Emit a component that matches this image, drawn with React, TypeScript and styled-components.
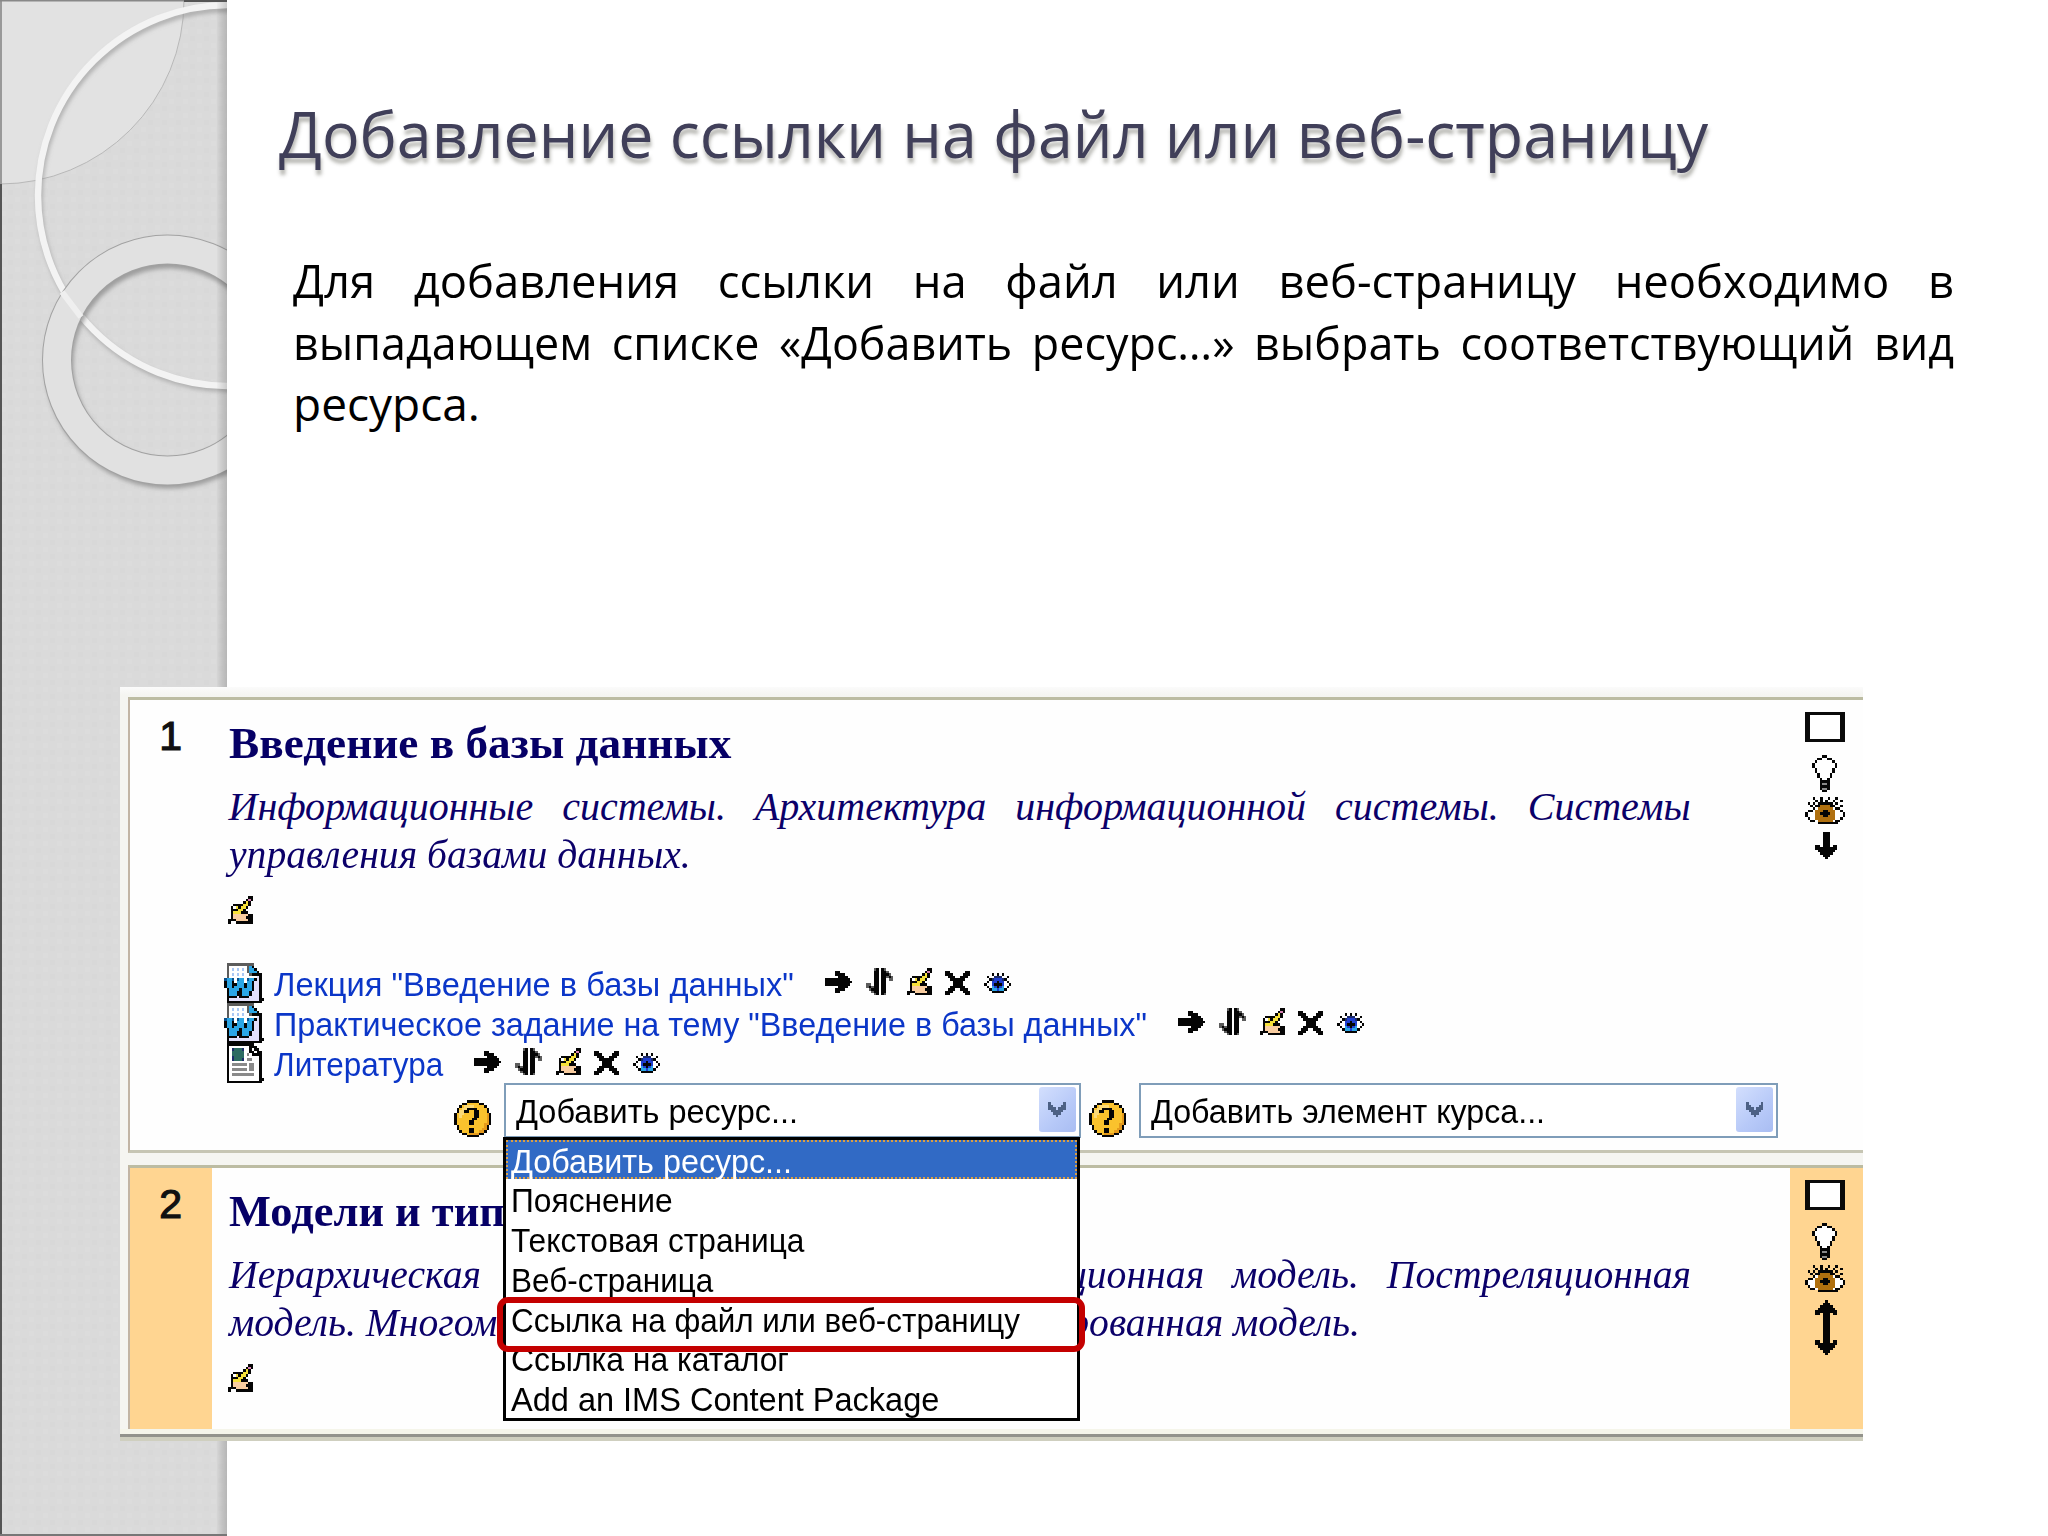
import React, { useLayoutEffect, useRef, useState } from "react";
import styled, { createGlobalStyle } from "styled-components";

const GlobalStyle = createGlobalStyle`
  html, body { margin: 0; padding: 0; background: #fff; }
  *, *::before, *::after { box-sizing: border-box; }
`;

/* ---------- pixel icons ---------- */

const CELL = 2.5;

const palette: Record<string, string> = {
  k: "#050505",
  g: "#5c5c5c",
  G: "#8a8a8a",
  w: "#ffffff",
  y: "#f6e03a",
  Y: "#fac22d",
  L: "#fbd977",
  O: "#e59a1c",
  p: "#d77fb4",
  s: "#f9cda0",
  b: "#1f3fd0",
  c: "#2ba6e6",
  d: "#0a4f8c",
  l: "#a9c8f5",
  v: "#e3e0fb",
  n: "#b0700f",
  t: "#2c6b62",
  N: "#1c2b6b",
};

const art = {
  arrow: [
    "...........",
    "....kk.....",
    "....kkkk...",
    ".....kkkk..",
    "kkkkkkkkkk.",
    "kkkkkkkkkkk",
    "kkkkkkkkkk.",
    ".....kkkk..",
    "....kkkk...",
    "....kk.....",
    "...........",
  ],
  move: [
    "...gk.kg...",
    "...kk.kkg..",
    "...kk.kkkg.",
    "...kk.kkgkg",
    "...kk.kk.gg",
    "...kk.kk...",
    "gg.kk.kk...",
    "gkgkk.kk...",
    ".gkkk.kk...",
    "..gkk.kk...",
    "...gk.kg...",
  ],
  edit: [
    "........kk",
    ".......kpk",
    "......kyk.",
    "..kkkkyyk.",
    ".kwykyyk..",
    ".kkkyyk...",
    ".kyyykkk..",
    ".ksssssskk",
    ".kssssskkk",
    "kkkssssskk",
    "k..kkkkkkk",
  ],
  remove: [
    "..........",
    "kk......kk",
    "kkk....kkk",
    ".kkk..kkk.",
    "..kkkkkk..",
    "...kkkk...",
    "...kkkk...",
    "..kkkkkk..",
    ".kkk..kkk.",
    "kkk....kkk",
    "kk......kk",
  ],
  eye: [
    "...........",
    "...........",
    "...k.k.k...",
    ".k..NNN..k.",
    "..kNbbbNk..",
    ".kwbbkbbwk.",
    "k.wbkkkbw.k",
    ".kwcbkbcwk.",
    "..kccbcck..",
    "...kkkkk...",
    "...........",
  ],
  word: [
    ".ggggggggggg....",
    ".gwwwwwwwgck....",
    ".gwlwlwlwgcck...",
    ".gwwwwwwwgccck..",
    ".gwlwlwlwwgkkkk.",
    ".gwwwwwwwwwwwvk.",
    "dccdwdccwdcckvk.",
    "kcckwcccwcckvvk.",
    "kcckkccckcckvvk.",
    "kcckcccckcckvvk.",
    ".kcccckcccckvvk.",
    ".kccckkccckvvvk.",
    ".kccckkccckvvvk.",
    ".kkkkvkkkkvvvvk.",
    ".kvvvvvvvvvvvvkk",
    ".kkkkkkkkkkkkkk.",
  ],
  page: [
    ".kkkkkkkkkkk....",
    ".kwwwwwwwwkkk...",
    ".kwNtttNwwkwkk..",
    ".kwtttttwwkkwkk.",
    ".kwtttttwGwkkkk.",
    ".kwNttttwwwwwwk.",
    ".kwNtttNwGGwwwk.",
    ".kwwwwwwwwwwwwk.",
    ".kwGGGGGGwGGwwk.",
    ".kwwwwwwwwGGwwk.",
    ".kwGGGGGGwGGwwk.",
    ".kwwwwwwwwwwwwk.",
    ".kwGGGGGGGGGwwk.",
    ".kwwwwwwwwwwwwk.",
    ".kwwwwwwwwwwwwkk",
    ".kkkkkkkkkkkkkk.",
  ],
  help: [
    ".....kkkkk.....",
    "...kkYYYYYkk...",
    "..kYLLLLYYYYk..",
    ".kYLLkkkkYYYYk.",
    ".kLLkkYYkkYYYk.",
    "kYLLYYYYkkYYYOk",
    "kYLYYYYYkkYYYOk",
    "kYYYYYYkkYYYYOk",
    "kYYYYYkkYYYYYOk",
    "kYYYYYkkYYYYOOk",
    ".kYYYYYYYYYYOk.",
    ".kYYYYkkYYYOOk.",
    "..kYYYkkYYOOk..",
    "...kkYOOOOkk...",
    ".....kkkkk.....",
  ],
  bulb: [
    "....kk....",
    "..kkwwkk..",
    ".kwwwwwwk.",
    "kwwwwwwwwk",
    "kwwwwwwwwk",
    ".kwwwwwwk.",
    ".kwwwwwwk.",
    "..kwwwwk..",
    "..kwwwwk..",
    "...kwwk...",
    "...kkkk...",
    "...kGGk...",
    "...kkkk...",
    "...kGGk...",
    "....kk....",
  ],
  bigEye: [
    "...k..k..k..k...",
    "....k.k.k..k..k.",
    ".k.k.kkkkkk.k...",
    "..k.kknnnnkk..k.",
    "...kwnnnnnnwkk..",
    ".kkwnnnkknnnwwk.",
    "kwwwnnkkkknnwwwk",
    "kwwwnnnkknnnwwwk",
    ".kwwnnnnnnnnwwk.",
    "..kkwnnnnnnwkk..",
    ".....kkkkkkkk...",
  ],
  down: [
    "...kkk...",
    "...kkk...",
    "...kkk...",
    "...kkk...",
    "...kkk...",
    "kk.kkk.kk",
    "kkkkkkkkk",
    ".kkkkkkk.",
    "..kkkkk..",
    "...kkk...",
    "....k....",
  ],
  upDown: [
    "....k....",
    "...kkk...",
    "..kkkkk..",
    ".kkkkkkk.",
    "kkkkkkkkk",
    "kk.kkk.kk",
    "...kkk...",
    "...kkk...",
    "...kkk...",
    "...kkk...",
    "...kkk...",
    "...kkk...",
    "...kkk...",
    "...kkk...",
    "...kkk...",
    "...kkk...",
    "kk.kkk.kk",
    "kkkkkkkkk",
    ".kkkkkkk.",
    "..kkkkk..",
    "...kkk...",
    "....k....",
  ],
  chevron: [
    "N.....N",
    "NN...NN",
    "NNN.NNN",
    ".NNNNN.",
    "..NNN..",
    "...N...",
  ],
};

type ArtName = keyof typeof art;

const PixelSvg = styled.svg`
  display: block;
  flex: none;
`;

function Pixels({ name, tint }: { name: ArtName; tint?: string }) {
  const rows = art[name];
  const cols = rows[0].length;
  const runs: { x: number; y: number; w: number; c: string }[] = [];
  rows.forEach((row, y) => {
    let x = 0;
    while (x < row.length) {
      const c = row[x];
      let w = 1;
      while (x + w < row.length && row[x + w] === c) w += 1;
      if (c !== ".") runs.push({ x, y, w, c });
      x += w;
    }
  });
  return (
    <PixelSvg
      width={cols * CELL}
      height={rows.length * CELL}
      viewBox={`0 0 ${cols} ${rows.length}`}
      shapeRendering="crispEdges"
    >
      {runs.map((r) => (
        <rect key={`${r.x}-${r.y}`} x={r.x} y={r.y} width={r.w} height={1} fill={tint ?? palette[r.c]} />
      ))}
    </PixelSvg>
  );
}

/* ---------- text stretched to a given width ---------- */

const FitBox = styled.span<{ $width: number }>`
  display: block;
  flex: none;
  width: ${(p) => p.$width}px;
  white-space: nowrap;
`;

const FitInner = styled.span`
  display: inline-block;
  transform-origin: 0 0;
`;

function Fit({ width, children }: { width: number; children: string }) {
  const ref = useRef<HTMLSpanElement>(null);
  const [scale, setScale] = useState(1);
  useLayoutEffect(() => {
    if (ref.current) setScale(width / ref.current.offsetWidth);
  }, [width, children]);
  return (
    <FitBox $width={width}>
      <FitInner ref={ref} style={{ transform: `scaleX(${scale})` }}>
        {children}
      </FitInner>
    </FitBox>
  );
}

/* ---------- slide ---------- */

const Slide = styled.div`
  position: relative;
  display: flex;
  width: 2048px;
  height: 1536px;
  overflow: hidden;
  background: #fff;
`;

const Sidebar = styled.aside`
  flex: none;
  width: 227px;
  height: 1536px;
  background: #dadada;
`;

const SidebarArt = styled.svg`
  display: block;
`;

const Content = styled.main`
  flex: 1;
  padding: 90px 95px 0 52px;
`;

const SlideTitle = styled.h1`
  margin: 0;
  font: 400 64px/88px "Open Sans", "Noto Sans", sans-serif;
  color: #403f59;
  text-shadow: 1px 5px 4px rgba(90, 90, 80, 0.45);
`;

const Body = styled.div`
  margin: 72px 0 0 14px;
  width: 1661px;
  font: 400 46px/61.5px "Open Sans", "Noto Sans", sans-serif;
  color: #000;
`;

const Line = styled.div<{ $width: number; $stretch: number; $justify?: boolean }>`
  width: ${(p) => p.$width / p.$stretch}px;
  transform: scaleX(${(p) => p.$stretch});
  transform-origin: 0 0;
  white-space: ${(p) => (p.$justify ? "normal" : "nowrap")};
  text-align: ${(p) => (p.$justify ? "justify" : "left")};
  text-align-last: ${(p) => (p.$justify ? "justify" : "left")};
`;

/* ---------- course window ---------- */

const Shot = styled.section`
  position: absolute;
  left: 120px;
  top: 687px;
  width: 1742.5px;
  height: 754px;
  padding: 10px 0 0 8px;
  background: linear-gradient(#fbfbfb, #f5f5f1 8px);
  display: flex;
  flex-direction: column;
`;

const Topic = styled.div<{ $height: number; $last?: boolean }>`
  flex: none;
  display: grid;
  grid-template-columns: 81.5px 1578px 1fr;
  height: ${(p) => p.$height}px;
  margin-bottom: ${(p) => (p.$last ? 0 : 12)}px;
  border-top: 3px solid #bcbca2;
  border-left: 2.5px solid #c2b5a5;
  border-bottom: ${(p) => (p.$last ? "none" : "3px solid #c6c5b3")};
  background: #fefefe;
`;

const Footer = styled.div`
  margin-left: -8px;
  height: 12px;
  background: linear-gradient(#f5f5ea 0 5px, #93938c 5px 8.5px, #cfcfbf 8.5px);
`;

const Num = styled.div<{ $active?: boolean }>`
  padding-top: 12px;
  text-align: center;
  font: 400 41px/48px "Liberation Sans", Arial, sans-serif;
  -webkit-text-stroke: 1.2px #111;
  color: #111;
  background: ${(p) => (p.$active ? "#ffd591" : "transparent")};
`;

const Tools = styled.div<{ $active?: boolean }>`
  display: flex;
  flex-direction: column;
  align-items: flex-start;
  padding: 12px 0 0 15px;
  background: ${(p) => (p.$active ? "#ffd591" : "transparent")};
`;

const ScreenIcon = styled.span`
  width: 40px;
  height: 30px;
  background: #fff;
  border: solid #0a0a0a;
  border-width: 3px 5px;
`;

const ToolSlot = styled.span<{ $left: number; $top: number }>`
  margin: ${(p) => p.$top}px 0 0 ${(p) => p.$left}px;
`;

const Main = styled.div`
  padding: 18px 0 0 17px;
`;

const TopicTitle = styled.h2`
  margin: 0 0 15px;
  font: 700 45px/50px "Liberation Serif", "Times New Roman", serif;
  color: #060066;
`;

const Summary = styled.div`
  font: italic 400 40px/47.5px "Liberation Serif", "Times New Roman", serif;
  color: #0b0069;
`;

const EditSlot = styled.div`
  margin: 18px 0 0 -1px;
`;

const Resources = styled.ul`
  list-style: none;
  margin: 39px 0 0 -5px;
  padding: 0;
`;

const Resource = styled.li`
  display: flex;
  align-items: flex-start;
  height: 40px;
  font: 400 33.5px/40px "Liberation Sans", Arial, sans-serif;
  color: #0b36c8;
`;

const ResourceName = styled.span`
  margin: 2px 0 0 10px;
`;

const Actions = styled.span`
  display: flex;
  padding: 5px 0 0 31px;
  gap: 13.5px;
`;

const Controls = styled.div`
  display: flex;
  align-items: flex-start;
  padding-left: 225px;
`;

const HelpSlot = styled.span<{ $before?: number; $after: number }>`
  margin: 17px ${(p) => p.$after}px 0 ${(p) => p.$before ?? 0}px;
`;

const Picker = styled.div<{ $width: number }>`
  position: relative;
  flex: none;
  display: flex;
  justify-content: space-between;
  width: ${(p) => p.$width}px;
  height: 55px;
  padding: 2px 3px 3px 10px;
  border: 2.5px solid #7f9db9;
  background: #fff;
  font: 400 33.5px/45px "Liberation Sans", Arial, sans-serif;
  color: #000;
`;

const PickerText = styled.span`
  padding-top: 2px;
`;

const PickerButton = styled.span`
  display: flex;
  align-items: center;
  justify-content: center;
  width: 37px;
  height: 45px;
  border-radius: 3px;
  background: linear-gradient(135deg, #d3dffd, #b7c9f8 60%, #a9bdf2);
`;

const Menu = styled.ul`
  position: absolute;
  left: -2.5px;
  top: 52px;
  z-index: 2;
  list-style: none;
  margin: 0;
  padding: 0;
  width: 577px;
  height: 284px;
  border: 3px solid #000;
  background: #fff;
`;

const MenuItem = styled.li<{ $selected?: boolean }>`
  height: 39.75px;
  padding-left: 3px;
  font: 400 33.5px/40px "Liberation Sans", Arial, sans-serif;
  color: ${(p) => (p.$selected ? "#fff" : "#000")};
  background: ${(p) => (p.$selected ? "#316ac5" : "transparent")};
  border: 2.5px ${(p) => (p.$selected ? "dotted #dc9f43" : "solid transparent")};
  border-bottom-width: ${(p) => (p.$selected ? 2.5 : 0)}px;
`;

const Highlight = styled.div`
  position: absolute;
  left: -9px;
  top: 157px;
  width: 588px;
  height: 55px;
  border: 6.5px solid #c40000;
  border-radius: 11px;
`;

const menuItems: [string, number][] = [
  ["Добавить ресурс...", 281],
  ["Пояснение", 162],
  ["Текстовая страница", 293],
  ["Веб-страница", 202],
  ["Ссылка на файл или веб-страницу", 509],
  ["Ссылка на каталог", 278],
  ["Add an IMS Content Package", 428],
];

const resources: { icon: ArtName; name: string; width: number }[] = [
  { icon: "word", name: 'Лекция "Введение в базы данных"', width: 520 },
  { icon: "word", name: 'Практическое задание на тему "Введение в базы данных"', width: 873 },
  { icon: "page", name: "Литература", width: 169 },
];

function SideDrawing() {
  return (
    <SidebarArt width="227" height="1536" viewBox="0 0 227 1536">
      <defs>
        <pattern id="weave" width="14" height="14" patternUnits="userSpaceOnUse">
          <rect width="14" height="14" fill="#dadada" />
          <rect width="5" height="5" x="1" y="1" fill="#dcdcdc" />
          <rect width="5" height="5" x="8" y="8" fill="#d8d8d8" />
        </pattern>
        <linearGradient id="edge" x1="0" x2="1" y1="0" y2="0">
          <stop offset="0" stopColor="#000" stopOpacity="0.02" />
          <stop offset="0.45" stopColor="#000" stopOpacity="0.09" />
          <stop offset="1" stopColor="#000" stopOpacity="0.17" />
        </linearGradient>
        <filter id="soft" x="-10%" y="-10%" width="120%" height="120%">
          <feGaussianBlur stdDeviation="2" />
        </filter>
      </defs>
      <rect width="227" height="1536" fill="url(#weave)" />
      <circle cx="0" cy="0" r="184" fill="#e2e2e2" stroke="#b8b8b8" strokeWidth="1" />
      <circle cx="229.5" cy="199" r="190" fill="none" stroke="#8f8f8f" strokeOpacity="0.6" strokeWidth="6" filter="url(#soft)" />
      <circle cx="228.5" cy="195.5" r="190.5" fill="none" stroke="#f3f3f3" strokeWidth="6.5" />
      <circle cx="169" cy="364" r="110" fill="none" stroke="#7d7d7d" strokeOpacity="0.65" strokeWidth="29" filter="url(#soft)" />
      <circle cx="167.5" cy="360" r="110.5" fill="none" stroke="#a2a2a2" strokeWidth="30" />
      <circle cx="167.5" cy="360" r="110.5" fill="none" stroke="#e1e1e1" strokeWidth="28" />
      <path d="M62 292 L81 317" stroke="#efefef" strokeWidth="6" />
      <rect x="217" y="0" width="10" height="1536" fill="url(#edge)" />
      <rect x="0" y="184" width="2" height="1352" fill="#555" />
      <rect x="0" y="0" width="2" height="184" fill="#999" />
      <rect x="0" y="0" width="184" height="1.5" fill="#888" />
      <rect x="184" y="0" width="43" height="2" fill="#555" />
      <rect x="0" y="1534" width="227" height="2" fill="#777" />
    </SidebarArt>
  );
}

function ToolColumn({ active, arrow }: { active?: boolean; arrow: ArtName }) {
  return (
    <Tools $active={active}>
      <ScreenIcon />
      <ToolSlot $left={7.5} $top={12.5}>
        <Pixels name="bulb" />
      </ToolSlot>
      <ToolSlot $left={0} $top={4.5}>
        <Pixels name="bigEye" />
      </ToolSlot>
      <ToolSlot $left={10} $top={7.5}>
        <Pixels name={arrow} />
      </ToolSlot>
    </Tools>
  );
}

export default function App() {
  return (
    <>
      <GlobalStyle />
      <Slide>
        <Sidebar>
          <SideDrawing />
        </Sidebar>
        <Content>
          <SlideTitle>
            <Fit width={1429}>Добавление ссылки на файл или веб-страницу</Fit>
          </SlideTitle>
          <Body>
            <Line $width={1661} $stretch={0.985} $justify>
              Для добавления ссылки на файл или веб-страницу необходимо в
            </Line>
            <Line $width={1661} $stretch={0.975} $justify>
              выпадающем списке «Добавить ресурс…» выбрать соответствующий вид
            </Line>
            <Line $width={1661} $stretch={1}>
              ресурса.
            </Line>
          </Body>
        </Content>

        <Shot>
          <Topic $height={456}>
            <Num>1</Num>
            <Main>
              <TopicTitle>
                <Fit width={502}>Введение в базы данных</Fit>
              </TopicTitle>
              <Summary>
                <Line $width={1462} $stretch={1} $justify>
                  Информационные системы. Архитектура информационной системы. Системы
                </Line>
                <Fit width={462}>управления базами данных.</Fit>
              </Summary>
              <EditSlot>
                <Pixels name="edit" />
              </EditSlot>
              <Resources>
                {resources.map((r) => (
                  <Resource key={r.name}>
                    <Pixels name={r.icon} />
                    <ResourceName>
                      <Fit width={r.width}>{r.name}</Fit>
                    </ResourceName>
                    <Actions>
                      <Pixels name="arrow" />
                      <Pixels name="move" />
                      <Pixels name="edit" />
                      <Pixels name="remove" />
                      <Pixels name="eye" />
                    </Actions>
                  </Resource>
                ))}
              </Resources>
              <Controls>
                <HelpSlot $after={12.5}>
                  <Pixels name="help" />
                </HelpSlot>
                <Picker $width={577}>
                  <PickerText>
                    <Fit width={282}>Добавить ресурс...</Fit>
                  </PickerText>
                  <PickerButton>
                    <Pixels name="chevron" tint="#4d6185" />
                  </PickerButton>
                  <Menu>
                    {menuItems.map(([label, width], i) => (
                      <MenuItem key={label} $selected={i === 0}>
                        <Fit width={width}>{label}</Fit>
                      </MenuItem>
                    ))}
                    <Highlight />
                  </Menu>
                </Picker>
                <HelpSlot $before={8} $after={13}>
                  <Pixels name="help" />
                </HelpSlot>
                <Picker $width={639}>
                  <PickerText>
                    <Fit width={394}>Добавить элемент курса...</Fit>
                  </PickerText>
                  <PickerButton>
                    <Pixels name="chevron" tint="#4d6185" />
                  </PickerButton>
                </Picker>
              </Controls>
            </Main>
            <ToolColumn arrow="down" />
          </Topic>

          <Topic $height={264} $last>
            <Num $active>2</Num>
            <Main>
              <TopicTitle>
                <Fit width={311}>Модели и типы</Fit>
              </TopicTitle>
              <Summary>
                <Line $width={1462} $stretch={0.992} $justify>
                  Иерархическая модель. Сетевая модель. Реляционная модель. Постреляционная
                </Line>
                <Fit width={1131}>модель. Многомерная модель. Объектно-ориентированная модель.</Fit>
              </Summary>
              <EditSlot>
                <Pixels name="edit" />
              </EditSlot>
            </Main>
            <ToolColumn active arrow="upDown" />
          </Topic>
          <Footer />
        </Shot>
      </Slide>
    </>
  );
}
